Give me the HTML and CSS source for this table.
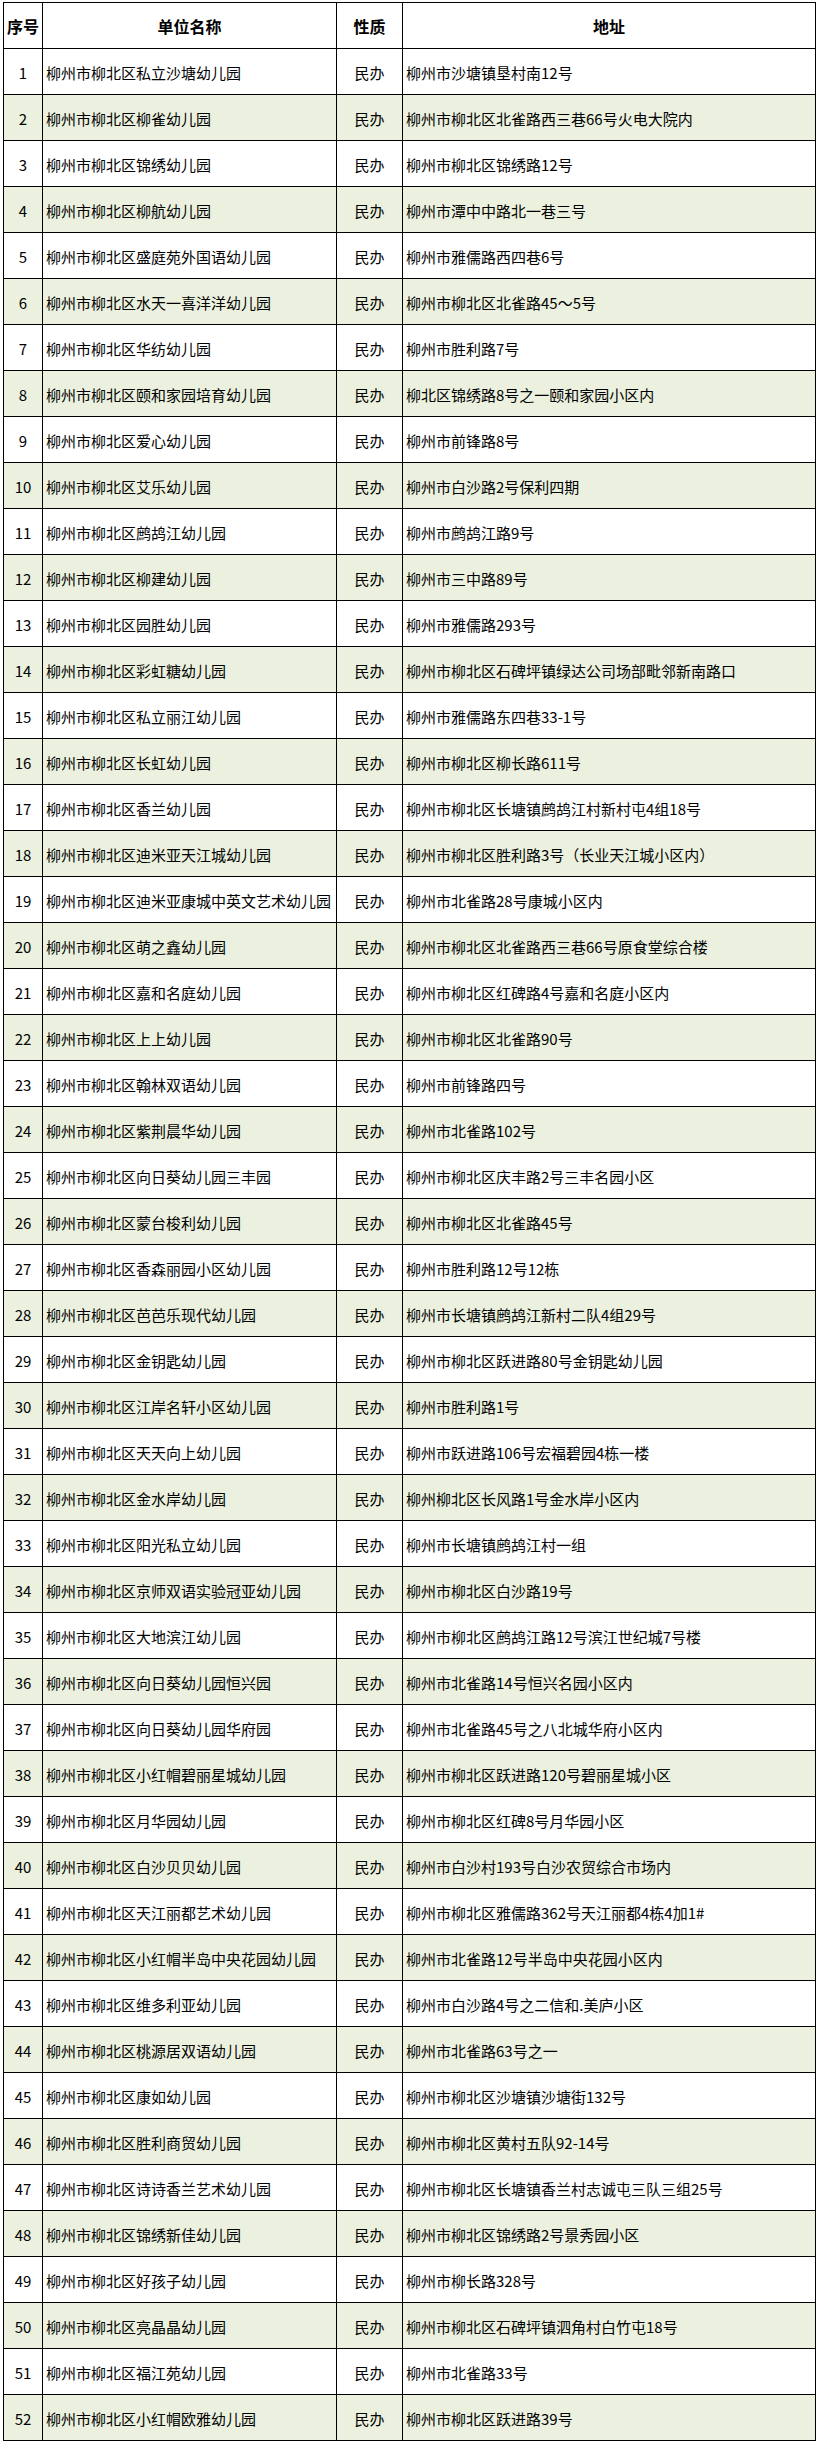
FILE: index.html
```html
<!DOCTYPE html>
<html lang="zh-CN">
<head>
<meta charset="utf-8">
<title>柳州市柳北区民办幼儿园名单</title>
<link rel="stylesheet" href="styles.css">
</head>
<body>
<div class="sheet">
  <div class="row head"><div class="c n">序号</div><div class="c name">单位名称</div><div class="c t">性质</div><div class="c addr">地址</div></div>
  <div class="row"><div class="c n">1</div><div class="c name">柳州市柳北区私立沙塘幼儿园</div><div class="c t">民办</div><div class="c addr">柳州市沙塘镇垦村南12号</div></div>
  <div class="row alt"><div class="c n">2</div><div class="c name">柳州市柳北区柳雀幼儿园</div><div class="c t">民办</div><div class="c addr">柳州市柳北区北雀路西三巷66号火电大院内</div></div>
  <div class="row"><div class="c n">3</div><div class="c name">柳州市柳北区锦绣幼儿园</div><div class="c t">民办</div><div class="c addr">柳州市柳北区锦绣路12号</div></div>
  <div class="row alt"><div class="c n">4</div><div class="c name">柳州市柳北区柳航幼儿园</div><div class="c t">民办</div><div class="c addr">柳州市潭中中路北一巷三号</div></div>
  <div class="row"><div class="c n">5</div><div class="c name">柳州市柳北区盛庭苑外国语幼儿园</div><div class="c t">民办</div><div class="c addr">柳州市雅儒路西四巷6号</div></div>
  <div class="row alt"><div class="c n">6</div><div class="c name">柳州市柳北区水天一喜洋洋幼儿园</div><div class="c t">民办</div><div class="c addr">柳州市柳北区北雀路45～5号</div></div>
  <div class="row"><div class="c n">7</div><div class="c name">柳州市柳北区华纺幼儿园</div><div class="c t">民办</div><div class="c addr">柳州市胜利路7号</div></div>
  <div class="row alt"><div class="c n">8</div><div class="c name">柳州市柳北区颐和家园培育幼儿园</div><div class="c t">民办</div><div class="c addr">柳北区锦绣路8号之一颐和家园小区内</div></div>
  <div class="row"><div class="c n">9</div><div class="c name">柳州市柳北区爱心幼儿园</div><div class="c t">民办</div><div class="c addr">柳州市前锋路8号</div></div>
  <div class="row alt"><div class="c n">10</div><div class="c name">柳州市柳北区艾乐幼儿园</div><div class="c t">民办</div><div class="c addr">柳州市白沙路2号保利四期</div></div>
  <div class="row"><div class="c n">11</div><div class="c name">柳州市柳北区鹧鸪江幼儿园</div><div class="c t">民办</div><div class="c addr">柳州市鹧鸪江路9号</div></div>
  <div class="row alt"><div class="c n">12</div><div class="c name">柳州市柳北区柳建幼儿园</div><div class="c t">民办</div><div class="c addr">柳州市三中路89号</div></div>
  <div class="row"><div class="c n">13</div><div class="c name">柳州市柳北区园胜幼儿园</div><div class="c t">民办</div><div class="c addr">柳州市雅儒路293号</div></div>
  <div class="row alt"><div class="c n">14</div><div class="c name">柳州市柳北区彩虹糖幼儿园</div><div class="c t">民办</div><div class="c addr">柳州市柳北区石碑坪镇绿达公司场部毗邻新南路口</div></div>
  <div class="row"><div class="c n">15</div><div class="c name">柳州市柳北区私立丽江幼儿园</div><div class="c t">民办</div><div class="c addr">柳州市雅儒路东四巷33-1号</div></div>
  <div class="row alt"><div class="c n">16</div><div class="c name">柳州市柳北区长虹幼儿园</div><div class="c t">民办</div><div class="c addr">柳州市柳北区柳长路611号</div></div>
  <div class="row"><div class="c n">17</div><div class="c name">柳州市柳北区香兰幼儿园</div><div class="c t">民办</div><div class="c addr">柳州市柳北区长塘镇鹧鸪江村新村屯4组18号</div></div>
  <div class="row alt"><div class="c n">18</div><div class="c name">柳州市柳北区迪米亚天江城幼儿园</div><div class="c t">民办</div><div class="c addr">柳州市柳北区胜利路3号（长业天江城小区内）</div></div>
  <div class="row"><div class="c n">19</div><div class="c name">柳州市柳北区迪米亚康城中英文艺术幼儿园</div><div class="c t">民办</div><div class="c addr">柳州市北雀路28号康城小区内</div></div>
  <div class="row alt"><div class="c n">20</div><div class="c name">柳州市柳北区萌之鑫幼儿园</div><div class="c t">民办</div><div class="c addr">柳州市柳北区北雀路西三巷66号原食堂综合楼</div></div>
  <div class="row"><div class="c n">21</div><div class="c name">柳州市柳北区嘉和名庭幼儿园</div><div class="c t">民办</div><div class="c addr">柳州市柳北区红碑路4号嘉和名庭小区内</div></div>
  <div class="row alt"><div class="c n">22</div><div class="c name">柳州市柳北区上上幼儿园</div><div class="c t">民办</div><div class="c addr">柳州市柳北区北雀路90号</div></div>
  <div class="row"><div class="c n">23</div><div class="c name">柳州市柳北区翰林双语幼儿园</div><div class="c t">民办</div><div class="c addr">柳州市前锋路四号</div></div>
  <div class="row alt"><div class="c n">24</div><div class="c name">柳州市柳北区紫荆晨华幼儿园</div><div class="c t">民办</div><div class="c addr">柳州市北雀路102号</div></div>
  <div class="row"><div class="c n">25</div><div class="c name">柳州市柳北区向日葵幼儿园三丰园</div><div class="c t">民办</div><div class="c addr">柳州市柳北区庆丰路2号三丰名园小区</div></div>
  <div class="row alt"><div class="c n">26</div><div class="c name">柳州市柳北区蒙台梭利幼儿园</div><div class="c t">民办</div><div class="c addr">柳州市柳北区北雀路45号</div></div>
  <div class="row"><div class="c n">27</div><div class="c name">柳州市柳北区香森丽园小区幼儿园</div><div class="c t">民办</div><div class="c addr">柳州市胜利路12号12栋</div></div>
  <div class="row alt"><div class="c n">28</div><div class="c name">柳州市柳北区芭芭乐现代幼儿园</div><div class="c t">民办</div><div class="c addr">柳州市长塘镇鹧鸪江新村二队4组29号</div></div>
  <div class="row"><div class="c n">29</div><div class="c name">柳州市柳北区金钥匙幼儿园</div><div class="c t">民办</div><div class="c addr">柳州市柳北区跃进路80号金钥匙幼儿园</div></div>
  <div class="row alt"><div class="c n">30</div><div class="c name">柳州市柳北区江岸名轩小区幼儿园</div><div class="c t">民办</div><div class="c addr">柳州市胜利路1号</div></div>
  <div class="row"><div class="c n">31</div><div class="c name">柳州市柳北区天天向上幼儿园</div><div class="c t">民办</div><div class="c addr">柳州市跃进路106号宏福碧园4栋一楼</div></div>
  <div class="row alt"><div class="c n">32</div><div class="c name">柳州市柳北区金水岸幼儿园</div><div class="c t">民办</div><div class="c addr">柳州柳北区长风路1号金水岸小区内</div></div>
  <div class="row"><div class="c n">33</div><div class="c name">柳州市柳北区阳光私立幼儿园</div><div class="c t">民办</div><div class="c addr">柳州市长塘镇鹧鸪江村一组</div></div>
  <div class="row alt"><div class="c n">34</div><div class="c name">柳州市柳北区京师双语实验冠亚幼儿园</div><div class="c t">民办</div><div class="c addr">柳州市柳北区白沙路19号</div></div>
  <div class="row"><div class="c n">35</div><div class="c name">柳州市柳北区大地滨江幼儿园</div><div class="c t">民办</div><div class="c addr">柳州市柳北区鹧鸪江路12号滨江世纪城7号楼</div></div>
  <div class="row alt"><div class="c n">36</div><div class="c name">柳州市柳北区向日葵幼儿园恒兴园</div><div class="c t">民办</div><div class="c addr">柳州市北雀路14号恒兴名园小区内</div></div>
  <div class="row"><div class="c n">37</div><div class="c name">柳州市柳北区向日葵幼儿园华府园</div><div class="c t">民办</div><div class="c addr">柳州市北雀路45号之八北城华府小区内</div></div>
  <div class="row alt"><div class="c n">38</div><div class="c name">柳州市柳北区小红帽碧丽星城幼儿园</div><div class="c t">民办</div><div class="c addr">柳州市柳北区跃进路120号碧丽星城小区</div></div>
  <div class="row"><div class="c n">39</div><div class="c name">柳州市柳北区月华园幼儿园</div><div class="c t">民办</div><div class="c addr">柳州市柳北区红碑8号月华园小区</div></div>
  <div class="row alt"><div class="c n">40</div><div class="c name">柳州市柳北区白沙贝贝幼儿园</div><div class="c t">民办</div><div class="c addr">柳州市白沙村193号白沙农贸综合市场内</div></div>
  <div class="row"><div class="c n">41</div><div class="c name">柳州市柳北区天江丽都艺术幼儿园</div><div class="c t">民办</div><div class="c addr">柳州市柳北区雅儒路362号天江丽都4栋4加1#</div></div>
  <div class="row alt"><div class="c n">42</div><div class="c name">柳州市柳北区小红帽半岛中央花园幼儿园</div><div class="c t">民办</div><div class="c addr">柳州市北雀路12号半岛中央花园小区内</div></div>
  <div class="row"><div class="c n">43</div><div class="c name">柳州市柳北区维多利亚幼儿园</div><div class="c t">民办</div><div class="c addr">柳州市白沙路4号之二信和.美庐小区</div></div>
  <div class="row alt"><div class="c n">44</div><div class="c name">柳州市柳北区桃源居双语幼儿园</div><div class="c t">民办</div><div class="c addr">柳州市北雀路63号之一</div></div>
  <div class="row"><div class="c n">45</div><div class="c name">柳州市柳北区康如幼儿园</div><div class="c t">民办</div><div class="c addr">柳州市柳北区沙塘镇沙塘街132号</div></div>
  <div class="row alt"><div class="c n">46</div><div class="c name">柳州市柳北区胜利商贸幼儿园</div><div class="c t">民办</div><div class="c addr">柳州市柳北区黄村五队92-14号</div></div>
  <div class="row"><div class="c n">47</div><div class="c name">柳州市柳北区诗诗香兰艺术幼儿园</div><div class="c t">民办</div><div class="c addr">柳州市柳北区长塘镇香兰村志诚屯三队三组25号</div></div>
  <div class="row alt"><div class="c n">48</div><div class="c name">柳州市柳北区锦绣新佳幼儿园</div><div class="c t">民办</div><div class="c addr">柳州市柳北区锦绣路2号景秀园小区</div></div>
  <div class="row"><div class="c n">49</div><div class="c name">柳州市柳北区好孩子幼儿园</div><div class="c t">民办</div><div class="c addr">柳州市柳长路328号</div></div>
  <div class="row alt"><div class="c n">50</div><div class="c name">柳州市柳北区亮晶晶幼儿园</div><div class="c t">民办</div><div class="c addr">柳州市柳北区石碑坪镇泗角村白竹屯18号</div></div>
  <div class="row"><div class="c n">51</div><div class="c name">柳州市柳北区福江苑幼儿园</div><div class="c t">民办</div><div class="c addr">柳州市北雀路33号</div></div>
  <div class="row alt"><div class="c n">52</div><div class="c name">柳州市柳北区小红帽欧雅幼儿园</div><div class="c t">民办</div><div class="c addr">柳州市柳北区跃进路39号</div></div>
</div>
</body>
</html>
```

FILE: styles.css
```css
html, body {
  margin: 0;
  padding: 0;
  background: #ffffff;
}

body {
  font-family: "Noto Sans CJK SC", "Noto Sans", sans-serif;
  color: #000000;
  font-size: 15px;
}

.sheet {
  margin: 2px 0 0 3px;
  width: max-content;
  border-left: 1px solid #000;
  border-top: 1px solid #000;
}

.row {
  display: grid;
  grid-template-columns: 39px 294px 66px 413px;
  height: 46px;
}

.row.alt {
  background: #ebf1de;
}

.c {
  box-sizing: border-box;
  border-right: 1px solid #000;
  border-bottom: 1px solid #000;
  display: flex;
  align-items: center;
  white-space: nowrap;
  overflow: hidden;
  padding-top: 2px;
  line-height: 1;
}

.c.n,
.c.t {
  justify-content: center;
}

.c.name,
.c.addr {
  padding-left: 3px;
}

.head .c {
  font-weight: 700;
  font-size: 16px;
  justify-content: center;
  padding-left: 0;
  padding-top: 0;
}
```
